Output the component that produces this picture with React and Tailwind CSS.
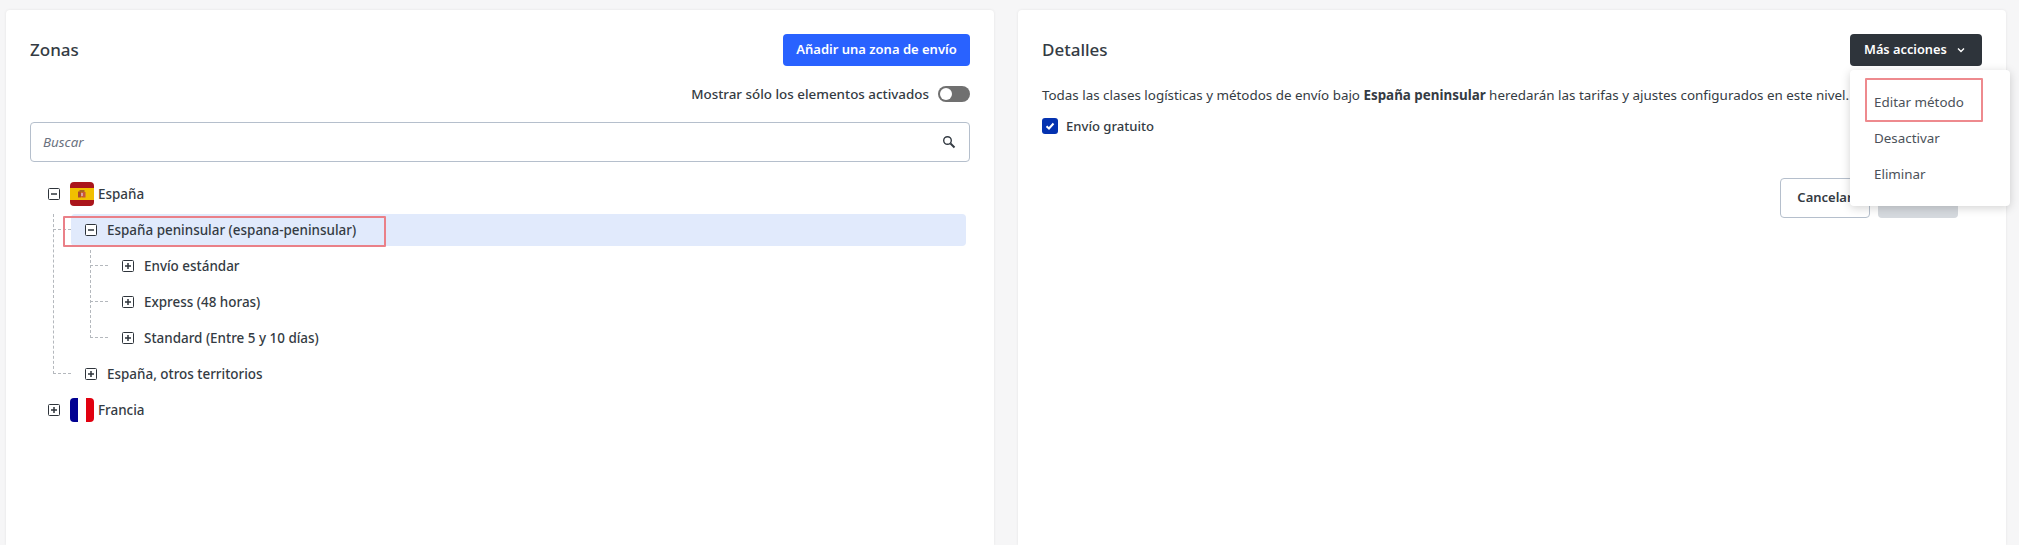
import React from "react";

const Expander = ({ open }) => (
  <svg width="12" height="12" viewBox="0 0 12 12" className="shrink-0">
    <rect x="0.5" y="0.5" width="11" height="11" rx="1" fill="#fff" stroke="#2e343b" />
    <path d={open ? "M3 6h6" : "M3 6h6M6 3v6"} stroke="#2e343b" strokeWidth="1.5" />
  </svg>
);

const SpainFlag = () => (
  <svg width="24" height="24" viewBox="0 0 24 24" className="shrink-0">
    <defs>
      <clipPath id="es"><rect width="24" height="24" rx="4" /></clipPath>
    </defs>
    <g clipPath="url(#es)">
      <rect width="24" height="24" fill="#aa151b" />
      <rect y="6" width="24" height="12" fill="#f1bf00" />
      <rect x="8" y="9.5" width="3.5" height="6" fill="#ad4a2a" />
      <rect x="12" y="10" width="3.5" height="5.5" fill="#c8553a" />
      <rect x="9.5" y="8" width="5" height="2" fill="#a8651f" />
      <rect x="11" y="11" width="2" height="3" fill="#d9a0a0" />
    </g>
  </svg>
);

const FranceFlag = () => (
  <svg width="24" height="24" viewBox="0 0 24 24" className="shrink-0">
    <defs>
      <clipPath id="fr"><rect width="24" height="24" rx="4" /></clipPath>
    </defs>
    <g clipPath="url(#fr)">
      <rect width="8" height="24" fill="#000091" />
      <rect x="8" width="8" height="24" fill="#fff" />
      <rect x="16" width="8" height="24" fill="#e1000f" />
    </g>
  </svg>
);

const VDash = ({ className }) => (
  <div className={"absolute w-0 border-l border-dashed border-[#b4b8bd] " + className} />
);
const HDash = ({ className }) => (
  <div className={"absolute h-0 border-t border-dashed border-[#b4b8bd] " + className} />
);

const Row = ({ children, className = "" }) => (
  <div className={"flex h-9 items-center text-[13.45px] font-medium text-[#343b43] " + className}>{children}</div>
);

const Label = ({ children, className = "ml-2.5" }) => <span className={"pt-px " + className}>{children}</span>;

export default function App() {
  return (
    <div
      className="flex h-[545px] gap-6 overflow-hidden bg-[#f6f6f7] pl-1.5 pr-[13px] pt-2.5 text-[#343b43]"
      style={{ fontFamily: '"Noto Sans", sans-serif' }}
    >
      {/* Left card */}
      <section className="flex-1 rounded-t bg-white px-6 pt-6 shadow-[0_0_3px_rgba(0,0,0,0.08)]">
        <div className="flex h-8 items-center justify-between">
          <h2 className="text-[17px] font-medium">Zonas</h2>
          <button className="flex h-8 w-[187px] items-center justify-center rounded bg-[#2962ff] text-[13px] font-semibold text-white">
            Añadir una zona de envío
          </button>
        </div>
        <div className="mt-5 flex h-4 items-center justify-end gap-[9px]">
          <span className="pt-px text-[13.4px] font-medium">Mostrar sólo los elementos activados</span>
          <span className="flex h-4 w-8 items-center rounded-full bg-[#707070] pl-0.5">
            <span className="h-3 w-3 rounded-full bg-white" />
          </span>
        </div>
        <div className="mt-5 flex h-10 items-center justify-between rounded border border-[#b5bfcc] pl-3 pr-3">
          <span className="pt-px text-[13.4px] italic text-[#6b7280]">Buscar</span>
          <svg width="16" height="16" viewBox="0 0 16 16" fill="none" stroke="#343b43" strokeWidth="1.4">
            <circle cx="6.5" cy="6.5" r="3.8" />
            <path d="M9.5 9.5l4 4" strokeWidth="1.9" />
          </svg>
        </div>

        <div className="relative mt-3.5 pl-[18px]">
          <VDash className="left-[23px] top-[38px] h-[160px]" />
          <HDash className="left-[23px] top-[53px] w-[18px]" />
          <HDash className="left-[23px] top-[197px] w-[18px]" />
          <VDash className="left-[60px] top-[74px] h-[88px]" />
          <HDash className="left-[60px] top-[89px] w-[18px]" />
          <HDash className="left-[60px] top-[125px] w-[18px]" />
          <HDash className="left-[60px] top-[161px] w-[18px]" />

          <Row>
            <Expander open />
            <span className="ml-2.5"><SpainFlag /></span>
            <Label className="ml-1">España</Label>
          </Row>
          <Row className="ml-[23px] mr-1">
            <div className="flex h-8 flex-1 items-center rounded bg-[#e1eafc] pl-3.5">
              <Expander open />
              <Label>España peninsular (espana-peninsular)</Label>
            </div>
          </Row>
          <Row className="pl-[74px]">
            <Expander />
            <Label>Envío estándar</Label>
          </Row>
          <Row className="pl-[74px]">
            <Expander />
            <Label>Express (48 horas)</Label>
          </Row>
          <Row className="pl-[74px]">
            <Expander />
            <Label>Standard (Entre 5 y 10 días)</Label>
          </Row>
          <Row className="pl-[37px]">
            <Expander />
            <Label>España, otros territorios</Label>
          </Row>
          <Row>
            <Expander />
            <span className="ml-2.5"><FranceFlag /></span>
            <Label className="ml-1">Francia</Label>
          </Row>
          <div className="absolute left-[33px] top-[40px] h-[31px] w-[323px] rounded-[1px] border-2 border-[#ea8088]" />
        </div>
      </section>

      {/* Right card */}
      <section className="relative flex-1 rounded-t bg-white px-6 pt-6 shadow-[0_0_3px_rgba(0,0,0,0.08)]">
        <div className="flex h-8 items-center justify-between">
          <h2 className="text-[17px] font-medium">Detalles</h2>
          <button className="flex h-8 w-[132px] items-center gap-[9px] rounded bg-[#2e343b] pl-3.5 text-[12.8px] font-semibold text-white">
            Más acciones
            <svg width="10" height="10" viewBox="0 0 10 10" fill="none" stroke="#fff" strokeWidth="1.4">
              <path d="M2 3.5L5 6.5L8 3.5" />
            </svg>
          </button>
        </div>
        <p className="mt-5 h-4 pt-px text-[13.4px] leading-4">
          Todas las clases logísticas y métodos de envío bajo <b className="font-bold">España peninsular</b> heredarán las tarifas y ajustes configurados en este nivel.
        </p>
        <label className="mt-4 flex h-4 items-center gap-2 text-[13.1px] font-medium">
          <span className="flex h-4 w-4 items-center justify-center rounded-[3px] bg-[#0432b0]">
            <svg width="10" height="10" viewBox="0 0 10 10" fill="none" stroke="#fff" strokeWidth="2">
              <path d="M1.5 5.2L4 7.5L8.5 2.5" />
            </svg>
          </span>
          <span className="pt-px">Envío gratuito</span>
        </label>
        <div className="mt-11 flex justify-end gap-2 pr-6">
          <button className="h-10 w-[90px] rounded border border-[#b5bfcc] text-[13px] font-semibold">Cancelar</button>
          <button className="h-10 w-20 rounded bg-[#d5d9de] text-[13px] font-semibold text-white">Guardar</button>
        </div>

        {/* Dropdown */}
        <div className="absolute left-[832px] top-[60px] w-40 rounded bg-white py-3.5 text-[13.4px] text-[#4b5159] shadow-[0_2px_10px_rgba(0,0,0,0.18)]">
          <div className="flex h-9 items-center pl-6">Editar método</div>
          <div className="flex h-9 items-center pl-6">Desactivar</div>
          <div className="flex h-9 items-center pl-6">Eliminar</div>
          <div className="absolute left-[15px] top-2 h-11 w-[118px] rounded-[1px] border-2 border-[#ee8a8e]" />
        </div>
      </section>
    </div>
  );
}
